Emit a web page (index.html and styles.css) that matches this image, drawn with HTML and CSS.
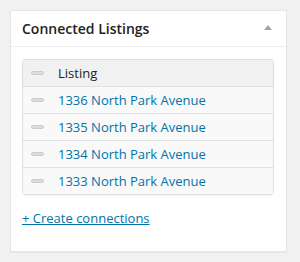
FILE: index.html
```html
<!DOCTYPE html>
<html lang="en">
<head>
    <meta charset="UTF-8">
    <meta name="viewport" content="width=device-width, initial-scale=1.0">
    <title>Connected Listings</title>
    <link rel="stylesheet" href="styles.css">
</head>
<body>
    <div class="postbox">
        <div class="postbox-header">
            <h2>Connected Listings</h2>
            <span class="toggle-arrow"></span>
        </div>

        <div class="inside">
            <table class="connections">
                <thead>
                    <tr>
                        <th class="col-handle"><span class="handle"></span></th>
                        <th>Listing</th>
                    </tr>
                </thead>
                <tbody>
                    <tr>
                        <td class="col-handle"><span class="handle"></span></td>
                        <td><a href="#">1336 North Park Avenue</a></td>
                    </tr>
                    <tr>
                        <td class="col-handle"><span class="handle"></span></td>
                        <td><a href="#">1335 North Park Avenue</a></td>
                    </tr>
                    <tr>
                        <td class="col-handle"><span class="handle"></span></td>
                        <td><a href="#">1334 North Park Avenue</a></td>
                    </tr>
                    <tr>
                        <td class="col-handle"><span class="handle"></span></td>
                        <td><a href="#">1333 North Park Avenue</a></td>
                    </tr>
                </tbody>
            </table>

            <p class="create"><a href="#">+ Create connections</a></p>
        </div>
    </div>
</body>
</html>
```

FILE: styles.css
```css
/* Global Styles */
body {
    font-family: "Open Sans", sans-serif;
    color: #222;
    background-color: #f1f1f1;
    margin: 0;
    padding: 10px;
}

a {
    color: #0073aa;
    text-decoration: none;
}

.postbox {
    width: 275px;
    height: 240px;
    background-color: #fff;
    border: 1px solid #e5e5e5;
    box-shadow: 0 1px 1px rgba(0,0,0,0.04);
}

.postbox-header {
    display: flex;
    align-items: center;
    justify-content: space-between;
    height: 35px;
    padding: 0 14px 0 11px;
    border-bottom: 1px solid #eee;
}

.postbox-header h2 {
    margin: 0;
    font-size: 14px;
    font-weight: 600;
    color: #222;
}

.toggle-arrow {
    width: 0;
    height: 0;
    border-left: 4px solid transparent;
    border-right: 4px solid transparent;
    border-bottom: 5px solid #a0a5aa;
    margin-top: -2px;
}

.inside {
    padding: 12px 12px 0 11px;
}

.connections {
    width: 100%;
    border-collapse: separate;
    border-spacing: 0;
    border: 1px solid #dedede;
    border-radius: 3px;
    box-shadow: 0 1px 1px rgba(0,0,0,0.04);
    font-size: 13px;
}

.connections th,
.connections td {
    height: 26px;
    padding: 0;
    text-align: left;
    vertical-align: middle;
    border-top: 1px solid #e1e1e1;
    background-color: #f9f9f9;
}

.connections th {
    font-weight: normal;
    color: #222;
    background-color: #f1f1f1;
    border-top: none;
}

.connections .col-handle {
    width: 27px;
    padding-left: 8px;
}

.handle {
    display: block;
    width: 11px;
    height: 2px;
    background-color: #ddd;
    border: 1px solid #ccc;
    border-radius: 2px;
}

.create {
    margin: 14px 0 0;
    font-size: 13px;
}

.create a {
    text-decoration: underline;
}
```
